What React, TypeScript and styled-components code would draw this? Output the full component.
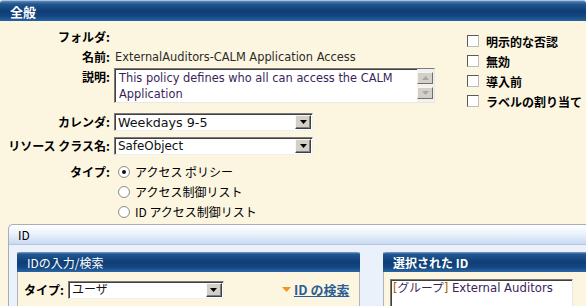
import React from "react";
import styled, { createGlobalStyle } from "styled-components";

const Global = createGlobalStyle`
  html, body { margin: 0; padding: 0; background: #fcf6e1; }
  body {
    font-family: "Liberation Sans", "Noto Sans CJK JP", sans-serif;
    font-size: 12px;
    color: #000;
    overflow: hidden;
  }
`;

const JP = `"Noto Sans CJK JP", "DejaVu Sans", sans-serif`;
const TAHOMA = `"DejaVu Sans", "Noto Sans CJK JP", sans-serif`;

const Page = styled.div`
  width: 586px;
  height: 306px;
  overflow: hidden;
  background: #fcf6e1;
`;

const SectionBar = styled.div`
  height: 21px;
  box-sizing: border-box;
  padding-left: 10px;
  display: flex;
  align-items: center;
  color: #fff;
  font-family: ${JP};
  font-weight: bold;
  font-size: 13px;
  line-height: 1;
  border-top: 1px solid #a9c0dc;
  border-radius: 3px 3px 0 0;
  background: linear-gradient(
    to bottom,
    #5d88bd 0px,
    #23578f 3px,
    #0f3e76 50%,
    #134680 75%,
    #2863a0 100%
  );
`;

const General = styled.div`
  display: flex;
  height: 203px;
`;

const Form = styled.div`
  width: 466px;
  flex: none;
  display: flex;
  flex-direction: column;
  padding-top: 8px;
`;

const Row = styled.div<{ $top: number }>`
  display: flex;
  align-items: flex-start;
  margin-top: ${(p) => p.$top}px;
`;

const Label = styled.div<{ $h: number }>`
  width: 110px;
  flex: none;
  text-align: right;
  font-family: ${JP};
  font-weight: bold;
  font-size: 12px;
  line-height: ${(p) => p.$h}px;
  white-space: nowrap;
  margin-right: 4px;
`;

const Value = styled.div`
  line-height: 16px;
  font-family: ${TAHOMA};
  font-size: 11.4px;
  color: #2b2b2b;
  padding-left: 1px;
  white-space: nowrap;
`;

const TextArea = styled.div`
  width: 321px;
  height: 35px;
  box-sizing: border-box;
  display: flex;
  background: #fff;
  border: 1px solid;
  border-color: #7b7b7b #e8e8e8 #e8e8e8 #7b7b7b;
  box-shadow: inset 1px 1px 0 #404040;
`;

const TextBody = styled.div`
  flex: 1;
  padding: 1px 0 0 4px;
  font-family: ${TAHOMA};
  font-size: 11.4px;
  line-height: 16px;
  color: #3a1f5a;
  white-space: nowrap;
`;

const ScrollBar = styled.div`
  width: 16px;
  flex: none;
  display: flex;
  flex-direction: column;
  gap: 3px;
  padding: 3px 1px 2px 0;
  background: #f2f1ec;
`;

const ScrollBtn = styled.div`
  height: 12px;
  box-sizing: border-box;
  background: #d4d0c8;
  border: 1px solid;
  border-color: #f4f4f4 #6f6f6f #6f6f6f #f4f4f4;
  display: flex;
  align-items: center;
  justify-content: center;
`;

const Select = styled.div<{ $w: number }>`
  width: ${(p) => p.$w}px;
  height: 18px;
  box-sizing: border-box;
  display: flex;
  align-items: stretch;
  background: #fff;
  border: 1px solid;
  border-color: #7b7b7b #f0f0f0 #f0f0f0 #7b7b7b;
  box-shadow: inset 1px 1px 0 #404040;
`;

const SelectText = styled.div<{ $size: number }>`
  flex: 1;
  padding-left: 3px;
  padding-top: 1px;
  font-family: ${TAHOMA};
  font-size: ${(p) => p.$size}px;
  line-height: 15px;
  color: #111;
  white-space: nowrap;
  overflow: hidden;
`;

const SelectBtn = styled.div`
  width: 16px;
  box-sizing: border-box;
  margin: 1px 1px 1px 0;
  background: #d4d0c8;
  border: 1px solid;
  border-color: #f8f8f8 #404040 #404040 #f8f8f8;
  box-shadow: inset -1px -1px 0 #808080;
  display: flex;
  align-items: center;
  justify-content: center;
`;

const Radios = styled.div`
  display: flex;
  flex-direction: column;
  gap: 1px;
  padding-left: 4px;
`;

const RadioRow = styled.div`
  display: flex;
  align-items: center;
  height: 19px;
  gap: 5px;
  font-family: ${JP};
  font-size: 12px;
  white-space: nowrap;
`;

const RadioDot = styled.span<{ $on?: boolean }>`
  width: 12px;
  height: 12px;
  box-sizing: border-box;
  border-radius: 50%;
  border: 1px solid #8e8e8e;
  background: radial-gradient(circle, #fff 0 55%, #ececec 100%);
  display: inline-flex;
  align-items: center;
  justify-content: center;
  &::after {
    content: "";
    width: 4px;
    height: 4px;
    border-radius: 50%;
    background: ${(p) => (p.$on ? "#111" : "transparent")};
  }
`;

const Flags = styled.div`
  display: flex;
  flex-direction: column;
  padding-top: 10px;
  padding-left: 1px;
`;

const Flag = styled.div`
  display: flex;
  align-items: center;
  height: 20px;
  gap: 7px;
  font-family: ${JP};
  font-weight: bold;
  font-size: 12px;
  white-space: nowrap;
`;

const Box = styled.span`
  width: 12px;
  height: 12px;
  flex: none;
  box-sizing: border-box;
  background: #fff;
  border: 1px solid;
  border-color: #5a5a5a #bdbdbd #bdbdbd #5a5a5a;
`;

const IdPanel = styled.div`
  margin-left: 8px;
  margin-right: -20px;
  border: 1px solid #a6aebb;
  border-right: none;
  border-radius: 5px 0 0 0;
  background: #eaf1fb;
  height: 120px;
`;

const IdHeader = styled.div`
  height: 20px;
  box-sizing: border-box;
  padding-left: 9px;
  display: flex;
  align-items: center;
  font-family: ${JP};
  font-size: 12px;
  border-radius: 5px 0 0 0;
  border-bottom: 1px solid #b8c6da;
  background: linear-gradient(to bottom, #ffffff 0%, #eef4fc 40%, #c8daf2 100%);
`;

const IdBody = styled.div`
  display: flex;
  gap: 23px;
  padding: 7px 0 0 8px;
`;

const SubPanel = styled.div<{ $w?: number }>`
  ${(p) => (p.$w ? `width: ${p.$w}px; flex: none;` : "flex: 1;")}
  box-sizing: border-box;
  height: 80px;
  background: #fcf6e1;
  border-left: 1px solid #b0b4bb;
  border-right: 1px solid #b0b4bb;
`;

const SubHeader = styled.div`
  height: 20px;
  box-sizing: border-box;
  padding-left: 10px;
  margin: 0 -1px;
  display: flex;
  align-items: center;
  color: #fff;
  font-family: ${JP};
  font-size: 12px;
  border-radius: 3px 3px 0 0;
  background: linear-gradient(
    to bottom,
    #7ea2cf 0px,
    #235893 2px,
    #0f3e76 50%,
    #134680 75%,
    #2a66a3 100%
  );
`;

const SubHeaderBold = styled(SubHeader)`
  font-weight: bold;
`;

const SearchRow = styled.div`
  display: flex;
  align-items: center;
  padding: 8px 0 0 6px;
`;

const SmallLabel = styled.span`
  font-family: ${JP};
  font-weight: bold;
  font-size: 12px;
  margin-right: 4px;
`;

const SearchLink = styled.a`
  margin-left: 58px;
  display: flex;
  align-items: center;
  gap: 3px;
  color: #2c5e96;
  font-family: ${JP};
  font-weight: bold;
  font-size: 13px;
  text-decoration: underline;
  cursor: pointer;
`;

const ListBox = styled.div`
  margin: 7px 0 0 6px;
  width: 183px;
  height: 40px;
  box-sizing: border-box;
  background: #fff;
  border: 1px solid;
  border-color: #7b7b7b #e8e8e8 #e8e8e8 #7b7b7b;
  box-shadow: inset 1px 1px 0 #404040;
  padding: 1px 0 0 2px;
  font-family: ${TAHOMA};
  font-size: 11.7px;
  line-height: 15px;
  color: #3a1f5a;
  white-space: nowrap;
`;

const Bracket = styled.span`
  color: #b05a00;
`;

const Tri = ({ dir, color }: { dir: "up" | "down"; color: string }) => (
  <svg width="7" height="4" viewBox="0 0 7 4">
    {dir === "down" ? (
      <path d="M0 0h7L3.5 4z" fill={color} />
    ) : (
      <path d="M0 4h7L3.5 0z" fill={color} />
    )}
  </svg>
);

const Dropdown = ({ w, text, size }: { w: number; text: string; size: number }) => (
  <Select $w={w}>
    <SelectText $size={size}>{text}</SelectText>
    <SelectBtn>
      <Tri dir="down" color="#000" />
    </SelectBtn>
  </Select>
);

export default function App() {
  return (
    <Page>
      <Global />
      <SectionBar>全般</SectionBar>
      <General>
        <Form>
          <Row $top={0}>
            <Label $h={16}>フォルダ:</Label>
          </Row>
          <Row $top={4}>
            <Label $h={16}>名前:</Label>
            <Value>ExternalAuditors-CALM Application Access</Value>
          </Row>
          <Row $top={3}>
            <Label $h={18}>説明:</Label>
            <TextArea>
              <TextBody>
                This policy defines who all can access the CALM
                <br />
                Application
              </TextBody>
              <ScrollBar>
                <ScrollBtn>
                  <Tri dir="up" color="#a7a7a7" />
                </ScrollBtn>
                <ScrollBtn>
                  <Tri dir="down" color="#a7a7a7" />
                </ScrollBtn>
              </ScrollBar>
            </TextArea>
          </Row>
          <Row $top={10}>
            <Label $h={18}>カレンダ:</Label>
            <Dropdown w={199} text="Weekdays 9-5" size={12.7} />
          </Row>
          <Row $top={6}>
            <Label $h={18}>リソース クラス名:</Label>
            <Dropdown w={199} text="SafeObject" size={11.9} />
          </Row>
          <Row $top={7}>
            <Label $h={19}>タイプ:</Label>
            <Radios>
              <RadioRow>
                <RadioDot $on />
                アクセス ポリシー
              </RadioRow>
              <RadioRow>
                <RadioDot />
                アクセス制御リスト
              </RadioRow>
              <RadioRow>
                <RadioDot />
                ID アクセス制御リスト
              </RadioRow>
            </Radios>
          </Row>
        </Form>
        <Flags>
          <Flag>
            <Box />
            明示的な否認
          </Flag>
          <Flag>
            <Box />
            無効
          </Flag>
          <Flag>
            <Box />
            導入前
          </Flag>
          <Flag>
            <Box />
            ラベルの割り当て
          </Flag>
        </Flags>
      </General>
      <IdPanel>
        <IdHeader>ID</IdHeader>
        <IdBody>
          <SubPanel $w={343}>
            <SubHeader>IDの入力/検索</SubHeader>
            <SearchRow>
              <SmallLabel>タイプ:</SmallLabel>
              <Dropdown w={156} text="ユーザ" size={12} />
              <SearchLink>
                <svg width="9" height="5" viewBox="0 0 9 5">
                  <path d="M0 0h9L4.5 5z" fill="#f0961e" />
                </svg>
                ID の検索
              </SearchLink>
            </SearchRow>
          </SubPanel>
          <SubPanel>
            <SubHeaderBold>選択された ID</SubHeaderBold>
            <ListBox>
              <Bracket>[</Bracket>グループ<Bracket>]</Bracket> External Auditors
            </ListBox>
          </SubPanel>
        </IdBody>
      </IdPanel>
    </Page>
  );
}
